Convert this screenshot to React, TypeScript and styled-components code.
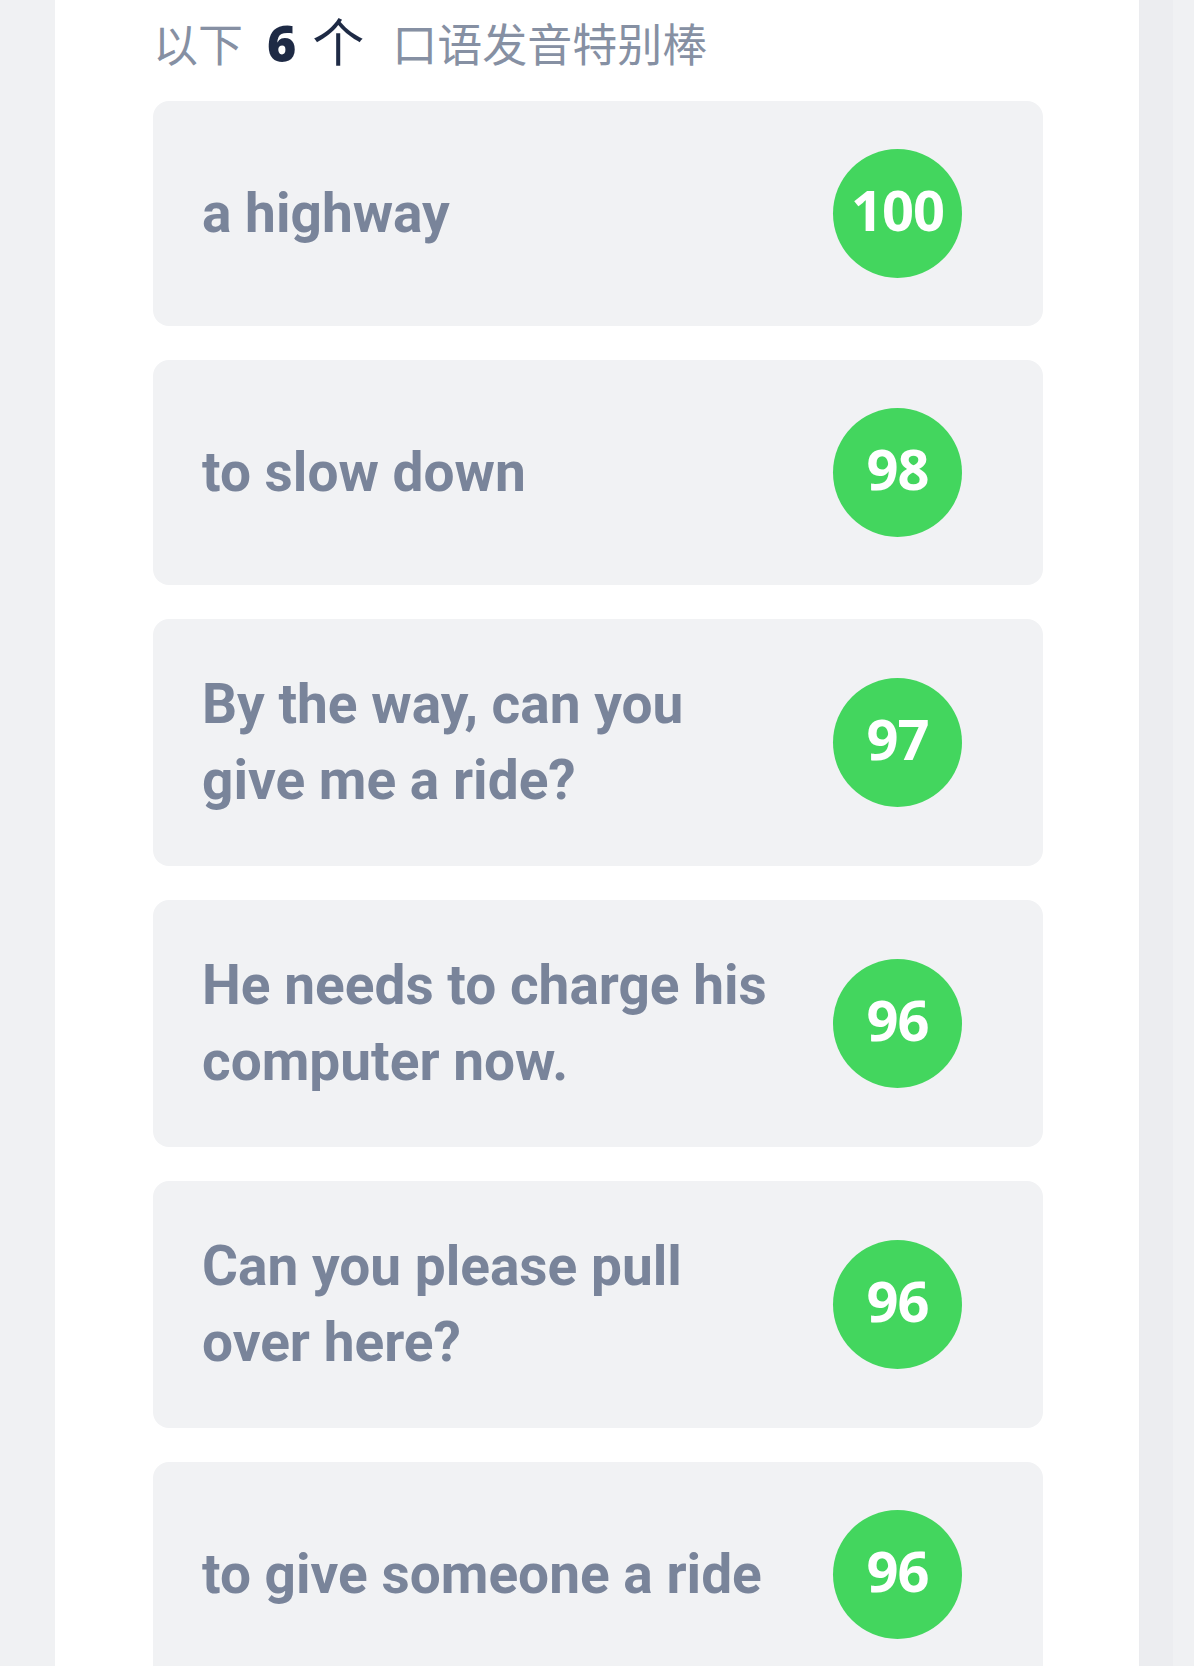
import React from "react";
import styled, { createGlobalStyle } from "styled-components";

const GlobalStyle = createGlobalStyle`
  html, body {
    margin: 0;
    padding: 0;
    background: #f0f1f3;
  }
  body {
    font-family: "Noto Sans", "Noto Sans CJK SC", sans-serif;
  }
`;

const Page = styled.div`
  display: flex;
  justify-content: center;
  min-height: 1666px;
  padding: 0 55px;
  box-sizing: border-box;
`;

const Panel = styled.main`
  flex: 1;
  background: #ffffff;
  padding: 10px 96px 40px 98px;
  box-shadow: 1px 0 0 #ebecef, 34px 0 0 #ecedf0;
`;

const Header = styled.h2`
  margin: 0 0 31px;
  height: 60px;
  display: flex;
  align-items: baseline;
  font-family: "Noto Sans CJK SC", "Noto Sans", sans-serif;
  font-weight: 400;
  font-size: 45px;
  line-height: 60px;
  color: #8690a3;
`;

const Muted = styled.span<{ $gap?: number }>`
  margin-left: ${(p) => p.$gap ?? 0}px;
`;

const Count = styled.b`
  margin-left: 24px;
  font-family: "Open Sans", "Noto Sans", sans-serif;
  font-weight: 800;
  font-size: 50px;
  color: #1e2a45;
`;

const Unit = styled.span`
  margin-left: 16px;
  font-size: 52px;
  color: #1e2a45;
`;

const List = styled.ul`
  list-style: none;
  margin: 0;
  padding: 0;
  display: flex;
  flex-direction: column;
  gap: 34px;
`;

const Card = styled.li`
  display: grid;
  grid-template-columns: 1fr 129px;
  column-gap: 56px;
  align-items: center;
  padding: 48px 81px 48px 49px;
  background: #f1f2f4;
  border-radius: 16px;
`;

const Sentence = styled.span`
  font-family: Roboto, "Noto Sans", sans-serif;
  font-weight: 700;
  font-size: 55px;
  line-height: 75.5px;
  color: #79849a;
`;

const Score = styled.span`
  width: 129px;
  height: 129px;
  box-sizing: border-box;
  padding-bottom: 10px;
  border-radius: 50%;
  background: #43d65e;
  display: flex;
  align-items: center;
  justify-content: center;
  font-family: "Noto Sans", sans-serif;
  font-weight: 700;
  font-size: 56px;
  line-height: 1;
  color: #ffffff;
  letter-spacing: -1px;
`;

const items = [
  { text: "a highway", score: 100 },
  { text: "to slow down", score: 98 },
  { text: "By the way, can you give me a ride?", score: 97 },
  { text: "He needs to charge his computer now.", score: 96 },
  { text: "Can you please pull over here?", score: 96 },
  { text: "to give someone a ride", score: 96 },
];

export default function App() {
  return (
    <>
      <GlobalStyle />
      <Page>
        <Panel>
          <Header>
            <Muted>以下</Muted>
            <Count>6</Count>
            <Unit>个</Unit>
            <Muted $gap={28}>口语发音特别棒</Muted>
          </Header>
          <List>
            {items.map((it, i) => (
              <Card key={i}>
                <Sentence>{it.text}</Sentence>
                <Score>{it.score}</Score>
              </Card>
            ))}
          </List>
        </Panel>
      </Page>
    </>
  );
}
